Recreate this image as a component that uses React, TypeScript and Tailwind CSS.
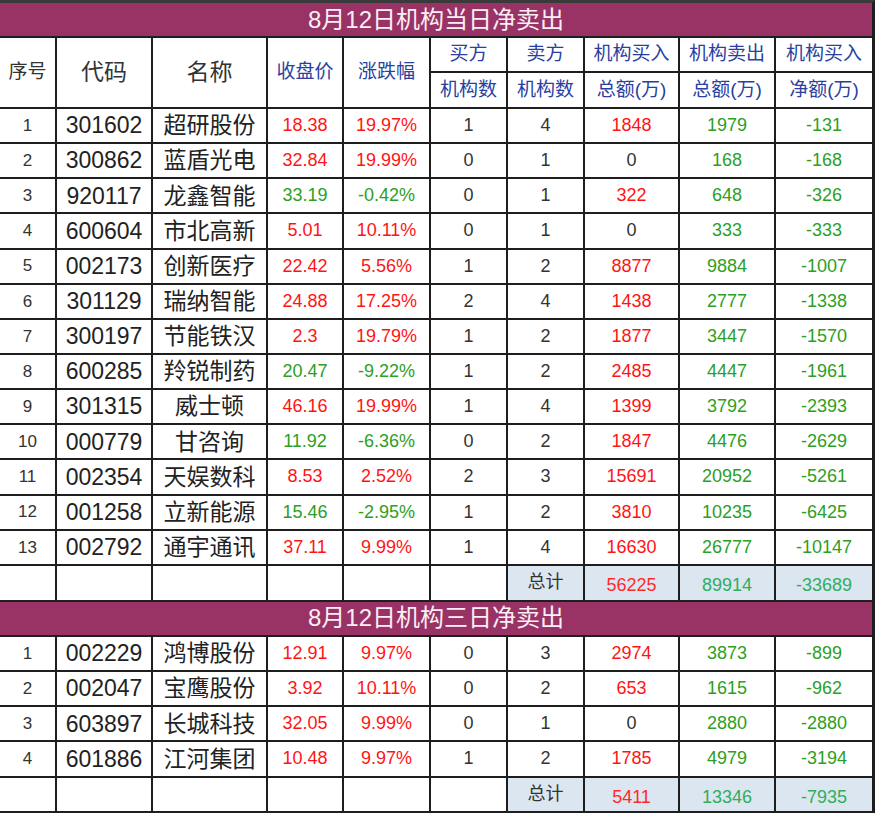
import React from 'react'

type Row = [number, string, string, string, string, number, number, string, string, string]

const dayRows: Row[] = [
  [1, '301602', '超研股份', '18.38', '19.97%', 1, 4, '1848', '1979', '-131'],
  [2, '300862', '蓝盾光电', '32.84', '19.99%', 0, 1, '0', '168', '-168'],
  [3, '920117', '龙鑫智能', '33.19', '-0.42%', 0, 1, '322', '648', '-326'],
  [4, '600604', '市北高新', '5.01', '10.11%', 0, 1, '0', '333', '-333'],
  [5, '002173', '创新医疗', '22.42', '5.56%', 1, 2, '8877', '9884', '-1007'],
  [6, '301129', '瑞纳智能', '24.88', '17.25%', 2, 4, '1438', '2777', '-1338'],
  [7, '300197', '节能铁汉', '2.3', '19.79%', 1, 2, '1877', '3447', '-1570'],
  [8, '600285', '羚锐制药', '20.47', '-9.22%', 1, 2, '2485', '4447', '-1961'],
  [9, '301315', '威士顿', '46.16', '19.99%', 1, 4, '1399', '3792', '-2393'],
  [10, '000779', '甘咨询', '11.92', '-6.36%', 0, 2, '1847', '4476', '-2629'],
  [11, '002354', '天娱数科', '8.53', '2.52%', 2, 3, '15691', '20952', '-5261'],
  [12, '001258', '立新能源', '15.46', '-2.95%', 1, 2, '3810', '10235', '-6425'],
  [13, '002792', '通宇通讯', '37.11', '9.99%', 1, 4, '16630', '26777', '-10147'],
]

const threeDayRows: Row[] = [
  [1, '002229', '鸿博股份', '12.91', '9.97%', 0, 3, '2974', '3873', '-899'],
  [2, '002047', '宝鹰股份', '3.92', '10.11%', 0, 2, '653', '1615', '-962'],
  [3, '603897', '长城科技', '32.05', '9.99%', 0, 1, '0', '2880', '-2880'],
  [4, '601886', '江河集团', '10.48', '9.97%', 1, 2, '1785', '4979', '-3194'],
]

const cell = 'flex items-center justify-center bg-white whitespace-nowrap'
const red = 'text-[#ff1414]'
const green = 'text-[#2c9f24]'

const Title = ({ text }: { text: string }) => (
  <div className="col-span-10 flex items-center justify-center bg-[#993366] text-[24px] text-[#fbeef5]">
    {text}
  </div>
)

const DataRow = ({ row }: { row: Row }) => {
  const [no, code, name, price, pct, buyers, sellers, buy, sell, net] = row
  const up = !pct.startsWith('-')
  return (
    <>
      <div className={`${cell} text-[17px] text-[#333]`}>{no}</div>
      <div className={`${cell} text-[23px] text-[#222]`}>{code}</div>
      <div className={`${cell} text-[23px] text-[#222]`}>{name}</div>
      <div className={`${cell} text-[18px] ${up ? red : green}`}>{price}</div>
      <div className={`${cell} text-[18px] ${up ? red : green}`}>{pct}</div>
      <div className={`${cell} text-[18px] text-[#333]`}>{buyers}</div>
      <div className={`${cell} text-[18px] text-[#333]`}>{sellers}</div>
      <div className={`${cell} text-[18px] ${buy === '0' ? 'text-[#333]' : red}`}>{buy}</div>
      <div className={`${cell} text-[18px] ${green}`}>{sell}</div>
      <div className={`${cell} text-[18px] ${green}`}>{net}</div>
    </>
  )
}

const TotalRow = ({ buy, sell, net }: { buy: string; sell: string; net: string }) => (
  <>
    {Array.from({ length: 6 }).map((_, i) => (
      <div className="bg-white" key={i} />
    ))}
    <div className="flex items-center justify-center bg-[#dce6f1] text-[18px] text-[#333]">总计</div>
    <div className="flex items-center justify-center bg-[#dce6f1] pt-[6px] text-[18px] text-[#ff2a2a]">{buy}</div>
    <div className="flex items-center justify-center bg-[#dce6f1] pt-[6px] text-[18px] text-[#2fae5e]">{sell}</div>
    <div className="flex items-center justify-center bg-[#dce6f1] pt-[6px] text-[18px] text-[#2fae5e]">{net}</div>
  </>
)

export default function App() {
  return (
    <div className="h-[813px] w-[875px] overflow-hidden bg-white font-['Liberation_Sans','Noto_Sans_CJK_SC',sans-serif]">
      <div className="grid grid-cols-[55px_94px_113px_74px_85px_75px_75px_93px_94px_96px] grid-rows-[33px_33px_34px_repeat(13,33.15px)_34px_33px_repeat(5,33.2px)] gap-[2px] border-t-[3px] border-r-[3px] border-b-2 border-t-[#3a3a3a] border-r-[#1e1e1e] border-b-[#1e1e1e] bg-[#1e1e1e]">
        <Title text="8月12日机构当日净卖出" />

        <div className={`${cell} row-span-2 text-[19px] text-[#333]`}>序号</div>
        <div className={`${cell} row-span-2 text-[23px] text-[#333]`}>代码</div>
        <div className={`${cell} row-span-2 text-[23px] text-[#333]`}>名称</div>
        <div className={`${cell} row-span-2 text-[19px] text-[#2a3f9f]`}>收盘价</div>
        <div className={`${cell} row-span-2 text-[19px] text-[#2a3f9f]`}>涨跌幅</div>
        <div className={`${cell} text-[19px] text-[#2a3f9f]`}>买方</div>
        <div className={`${cell} text-[19px] text-[#2a3f9f]`}>卖方</div>
        <div className={`${cell} text-[19px] text-[#2a3f9f]`}>机构买入</div>
        <div className={`${cell} text-[19px] text-[#2a3f9f]`}>机构卖出</div>
        <div className={`${cell} text-[19px] text-[#2a3f9f]`}>机构买入</div>
        <div className={`${cell} text-[19px] text-[#2a3f9f]`}>机构数</div>
        <div className={`${cell} text-[19px] text-[#2a3f9f]`}>机构数</div>
        <div className={`${cell} text-[19px] text-[#2a3f9f]`}>总额(万)</div>
        <div className={`${cell} text-[19px] text-[#2a3f9f]`}>总额(万)</div>
        <div className={`${cell} text-[19px] text-[#2a3f9f]`}>净额(万)</div>

        {dayRows.map((row) => (
          <DataRow key={`d-${row[1]}`} row={row} />
        ))}
        <TotalRow buy="56225" sell="89914" net="-33689" />

        <Title text="8月12日机构三日净卖出" />
        {threeDayRows.map((row) => (
          <DataRow key={`t-${row[1]}`} row={row} />
        ))}
        <TotalRow buy="5411" sell="13346" net="-7935" />
      </div>
    </div>
  )
}
